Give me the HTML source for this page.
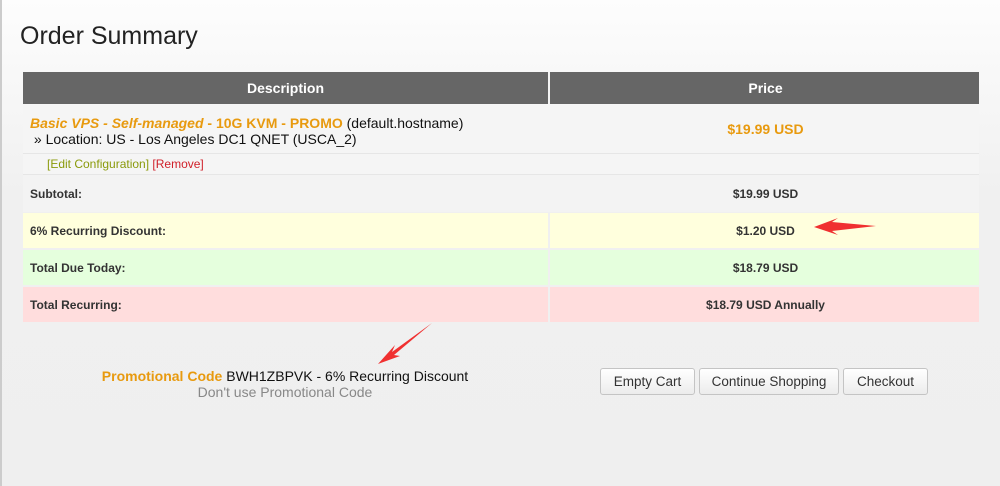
<!DOCTYPE html>
<html><head><style>
body{margin:0;width:1000px;height:486px;overflow:hidden;font-family:"Liberation Sans",sans-serif;background:linear-gradient(#fdfdfd,#f0f0f0 40%,#efefef);position:relative}
.a{position:absolute}
h1{position:absolute;left:20px;top:22px;margin:0;font-weight:normal;font-size:25px;color:#222}
.row{position:absolute;left:23px;width:956px;}
.c1,.c2{position:absolute;top:0;bottom:0;display:flex;align-items:center;font-size:12px;font-weight:bold;color:#333}
.c1{left:0;width:527px;padding-left:7px;box-sizing:border-box}
.c2{left:529px;right:0;justify-content:center}
.btn{position:absolute;top:368px;height:27px;border:1px solid #c4c4c4;border-radius:3px;background:linear-gradient(#fff,#ececec);font-size:13.5px;color:#333;display:flex;align-items:center;justify-content:center;box-sizing:border-box}
</style></head><body>
<div class="a" style="left:0;top:0;width:2px;height:486px;background:#ccc"></div>
<h1>Order Summary</h1>
<div class="row" style="top:72px;height:32px;background:#666"><div class="c1" style="justify-content:center;color:#fff;font-size:14px;padding:0;border-right:2px solid #f3f3f3">Description</div><div class="c2" style="color:#fff;font-size:14px">Price</div></div>
<div class="row" style="top:105px;height:48px;background:#f5f5f5;border-bottom:1px solid #e6e6e6"><div class="c1" style="display:block;padding-top:10px;font-weight:normal;font-size:14px;color:#111;line-height:16px"><span style="color:#e89a0f;font-weight:bold"><i>Basic VPS - Self-managed</i> - 10G KVM - PROMO</span> (default.hostname)<br>&nbsp;» Location: US - Los Angeles DC1 QNET (USCA_2)</div><div class="c2" style="color:#e89a0f;font-size:14px">$19.99 USD</div></div>
<div class="row" style="top:154px;height:20px;background:#f5f5f5;border-bottom:1px solid #e6e6e6"><div class="c1" style="padding-left:24px;font-weight:normal"><span style="color:#8a9a0a">[Edit Configuration]</span>&nbsp;<span style="color:#d0202a">[Remove]</span></div></div>
<div class="row" style="top:175px;height:37px;background:#f3f3f3"><div class="c1">Subtotal:</div><div class="c2">$19.99 USD</div></div>
<div class="row" style="top:213px;height:35px;background:#ffffdd"><div class="c1" style="border-right:2px solid #f0f0f0">6% Recurring Discount:</div><div class="c2">$1.20 USD</div></div>
<div class="row" style="top:250px;height:35px;background:#e5ffdd"><div class="c1" style="border-right:2px solid #f0f0f0">Total Due Today:</div><div class="c2">$18.79 USD</div></div>
<div class="row" style="top:287px;height:35px;background:#ffdddd"><div class="c1" style="border-right:2px solid #f0f0f0">Total Recurring:</div><div class="c2">$18.79 USD Annually</div></div>
<svg class="a" style="left:0;top:0" width="1000" height="486"><polygon points="876,226 832,222 838,218 814,227 838,235 832,231" fill="#f03030"/><polygon points="432,323 392,352 395,345 378,364 400,356 394,355" fill="#f03030"/></svg>
<div class="a" style="left:0;width:570px;top:368px;text-align:center;font-size:14px;color:#111;line-height:16px"><span style="color:#e89a0f;font-weight:bold">Promotional Code</span> BWH1ZBPVK - 6% Recurring Discount<br><span style="color:#888">Don't use Promotional Code</span></div>
<div class="btn" style="left:600px;width:95px">Empty Cart</div>
<div class="btn" style="left:699px;width:140px">Continue Shopping</div>
<div class="btn" style="left:843px;width:85px">Checkout</div>
</body></html>
